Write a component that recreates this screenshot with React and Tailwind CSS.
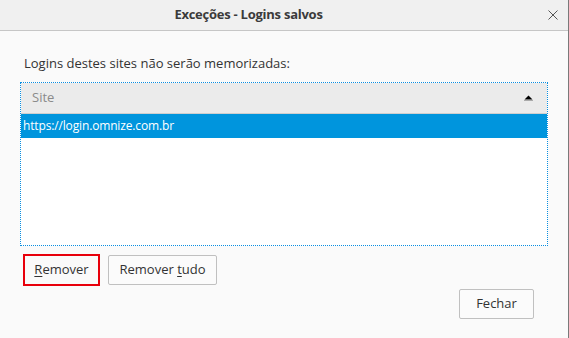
export default function App() {
  const font = { fontFamily: '"Open Sans", "Noto Sans", sans-serif' };
  return (
    <div className="w-[569px] h-[338px] flex bg-[#fafafa] overflow-hidden" style={font}>
      <div className="flex-1 flex flex-col">
        <div className="h-[30px] bg-[#f0f0f0] border-b border-[#c6c6c6] flex items-center relative box-content">
          <div className="flex-1 pr-[71px] text-center font-bold text-[13px] tracking-[-0.25px] text-[#3b3b3b]">
            Exceções - Logins salvos
          </div>
          <svg className="absolute right-[10px] top-[10px]" width="10" height="10" viewBox="0 0 10 10">
            <path d="M0.5 0.5L9.5 9.5M9.5 0.5L0.5 9.5" stroke="#555" strokeWidth="1" />
          </svg>
        </div>
        <div className="pl-[20px] pr-[20px] pt-[22px] flex flex-col">
          <div className="pl-[4px] text-[13px] text-[#333] leading-[20px] h-[20px]">
            Logins destes sites não serão memorizadas:
          </div>
          <div className="mt-[9px] h-[164px] border border-dotted border-[#0a8ee0] bg-white flex flex-col">
            <div className="h-[31px] bg-[#ebebeb] border-b border-[#cfcfcf] flex items-center pl-[11px] pr-[14px]">
              <span className="flex-1 text-[13px] text-[#8a8a8a]">Site</span>
              <svg width="9" height="6" viewBox="0 0 9 6">
                <path d="M0.5 4.5L4.5 0.5L8.5 4.5Z" fill="#000" />
                <rect x="0" y="5" width="9" height="1" fill="#aaa" />
              </svg>
            </div>
            <div className="h-[24px] bg-[#0095dd] text-white text-[12px] tracking-[-0.15px] flex items-center pl-[2px]">
              https://login.omnize.com.br
            </div>
          </div>
          <div className="mt-[8px] flex items-start pl-[3px] gap-[8px]">
            <div className="w-[77px] h-[32px] border-2 border-[#e8000b] flex items-center justify-center text-[13px] text-[#333]">
              <span><span className="underline underline-offset-2">R</span>emover</span>
            </div>
            <div className="mt-[1px] w-[109px] h-[30px] border border-[#c0c0c0] rounded-[2px] bg-[#fbfbfb] flex items-center justify-center text-[13px] text-[#333]">
              <span>Remover <span className="underline underline-offset-2">t</span>udo</span>
            </div>
          </div>
          <div className="mt-[3px] flex justify-end pr-[14px]">
            <div className="w-[75px] h-[30px] border border-[#c0c0c0] rounded-[2px] bg-[#fbfbfb] flex items-center justify-center text-[13px] text-[#333]">
              Fechar
            </div>
          </div>
        </div>
      </div>
      <div className="w-[1px] bg-[#7a7a7a]"></div>
    </div>
  );
}
